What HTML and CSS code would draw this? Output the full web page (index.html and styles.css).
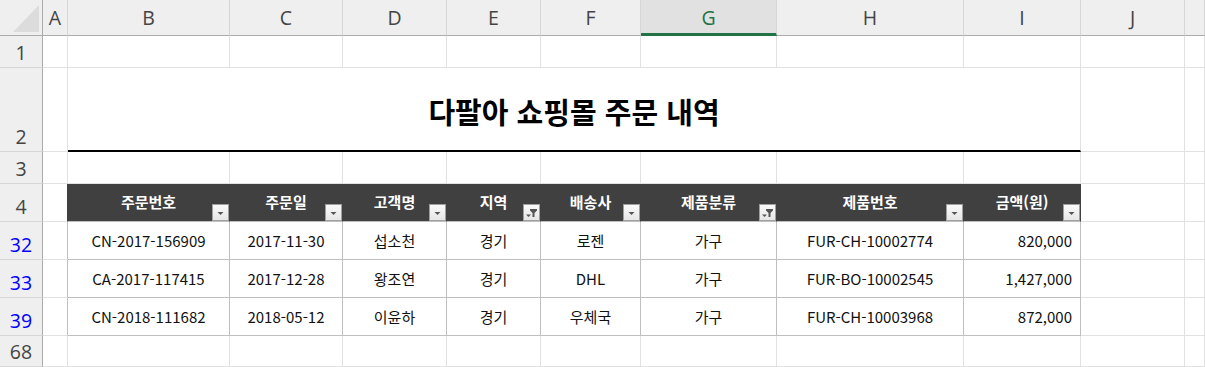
FILE: index.html
```html
<!DOCTYPE html>
<html lang="ko">
<head>
<meta charset="utf-8">
<title>다팔아 쇼핑몰 주문 내역</title>
<link rel="stylesheet" href="styles.css">
</head>
<body>
<div class="sheet">
  <div class="corner"><svg width="42" height="35" viewBox="0 0 42 35"><polygon points="13,32 39,32 39,5" fill="#dcdcdc"/></svg></div>
  <div class="ch">A</div><div class="ch">B</div><div class="ch">C</div><div class="ch">D</div><div class="ch">E</div><div class="ch">F</div><div class="ch sel">G</div><div class="ch">H</div><div class="ch">I</div><div class="ch">J</div><div class="ch"></div>

  <div class="rh">1</div>
  <div class="c"></div><div class="c"></div><div class="c"></div><div class="c"></div><div class="c"></div><div class="c"></div><div class="c"></div><div class="c"></div><div class="c"></div><div class="c"></div><div class="c"></div>

  <div class="rh">2</div>
  <div class="c"></div>
  <div class="c title">다팔아 쇼핑몰 주문 내역</div>
  <div class="c"></div><div class="c"></div>

  <div class="rh">3</div>
  <div class="c"></div><div class="c"></div><div class="c"></div><div class="c"></div><div class="c"></div><div class="c"></div><div class="c"></div><div class="c"></div><div class="c"></div><div class="c"></div><div class="c"></div>

  <div class="rh">4</div>
  <div class="c lead dark-edge"></div>
  <div class="c hd">주문번호<span class="fb"><svg width="15" height="15" viewBox="0 0 15 15"><polygon points="4.5,7 10.5,7 7.5,10" fill="#555"/></svg></span></div>
  <div class="c hd">주문일<span class="fb"><svg width="15" height="15" viewBox="0 0 15 15"><polygon points="4.5,7 10.5,7 7.5,10" fill="#555"/></svg></span></div>
  <div class="c hd">고객명<span class="fb"><svg width="15" height="15" viewBox="0 0 15 15"><polygon points="4.5,7 10.5,7 7.5,10" fill="#555"/></svg></span></div>
  <div class="c hd">지역<span class="fb"><svg width="15" height="15" viewBox="0 0 15 15"><polygon points="6,4 13,4 13,5.5 10.5,8 10.5,12 8.5,12 8.5,8 6,5.5" fill="#555"/><polygon points="2,9.5 7,9.5 4.5,12" fill="#555"/></svg></span></div>
  <div class="c hd">배송사<span class="fb"><svg width="15" height="15" viewBox="0 0 15 15"><polygon points="4.5,7 10.5,7 7.5,10" fill="#555"/></svg></span></div>
  <div class="c hd">제품분류<span class="fb"><svg width="15" height="15" viewBox="0 0 15 15"><polygon points="6,4 13,4 13,5.5 10.5,8 10.5,12 8.5,12 8.5,8 6,5.5" fill="#555"/><polygon points="2,9.5 7,9.5 4.5,12" fill="#555"/></svg></span></div>
  <div class="c hd">제품번호<span class="fb"><svg width="15" height="15" viewBox="0 0 15 15"><polygon points="4.5,7 10.5,7 7.5,10" fill="#555"/></svg></span></div>
  <div class="c hd">금액(원)<span class="fb"><svg width="15" height="15" viewBox="0 0 15 15"><polygon points="4.5,7 10.5,7 7.5,10" fill="#555"/></svg></span></div>
  <div class="c"></div><div class="c"></div>

  <div class="rh blue">32</div>
  <div class="c lead"></div>
  <div class="c td">CN-2017-156909</div><div class="c td">2017-11-30</div><div class="c td">섭소천</div><div class="c td">경기</div><div class="c td">로젠</div><div class="c td">가구</div><div class="c td">FUR-CH-10002774</div><div class="c td num">820,000</div>
  <div class="c"></div><div class="c"></div>

  <div class="rh blue">33</div>
  <div class="c lead"></div>
  <div class="c td">CA-2017-117415</div><div class="c td">2017-12-28</div><div class="c td">왕조연</div><div class="c td">경기</div><div class="c td">DHL</div><div class="c td">가구</div><div class="c td">FUR-BO-10002545</div><div class="c td num">1,427,000</div>
  <div class="c"></div><div class="c"></div>

  <div class="rh blue">39</div>
  <div class="c lead"></div>
  <div class="c td">CN-2018-111682</div><div class="c td">2018-05-12</div><div class="c td">이윤하</div><div class="c td">경기</div><div class="c td">우체국</div><div class="c td">가구</div><div class="c td">FUR-CH-10003968</div><div class="c td num">872,000</div>
  <div class="c"></div><div class="c"></div>

  <div class="rh">68</div>
  <div class="c"></div><div class="c"></div><div class="c"></div><div class="c"></div><div class="c"></div><div class="c"></div><div class="c"></div><div class="c"></div><div class="c"></div><div class="c"></div><div class="c"></div>
</div>
</body>
</html>
```

FILE: styles.css
```css
html, body {
  margin: 0;
  padding: 0;
  background: #fff;
  overflow: hidden;
}

.sheet {
  display: grid;
  grid-template-columns: 43px 25px 162px 113px 104px 94px 100px 136px 187px 117px 104px 1fr;
  grid-template-rows: 36px 32px 84px 32px 38px 38px 38px 38px 1fr;
  width: 1205px;
  height: 367px;
  font-family: "Noto Sans CJK KR", "Noto Sans", sans-serif;
}

.sheet > div {
  box-sizing: border-box;
  min-width: 0;
}

.corner {
  background: #efefef;
  border-right: 1px solid #ababab;
  border-bottom: 1px solid #ababab;
}
.corner svg { display: block; }

.ch {
  background: #efefef;
  border-right: 1px solid #d6d6d6;
  border-bottom: 1px solid #ababab;
  color: #444;
  font-family: "Open Sans", "Noto Sans", sans-serif;
  font-size: 19.5px;
  display: flex;
  align-items: center;
  justify-content: center;
}
.ch.sel {
  background: #e1e1e1;
  color: #217346;
  border-bottom: 3px solid #217346;
  padding-top: 2px;
}

.rh {
  background: #efefef;
  border-right: 1px solid #ababab;
  border-bottom: 1px solid #d6d6d6;
  color: #444;
  font-family: "Open Sans", "Noto Sans", sans-serif;
  font-size: 19.5px;
  line-height: 20px;
  display: flex;
  align-items: flex-end;
  justify-content: center;
  padding-bottom: 4px;
}
.rh.blue { color: #0000ff; }

.c {
  border-right: 1px solid #e1e1e1;
  border-bottom: 1px solid #e1e1e1;
}

.title {
  grid-column: span 8;
  border-bottom: 2px solid #000;
  display: flex;
  align-items: center;
  justify-content: center;
  font-size: 29px;
  font-weight: 700;
  color: #000;
  padding-top: 3px;
}

.lead { border-right-color: #bfbfbf; }
.dark-edge { border-right-color: #404040; }

.hd {
  position: relative;
  background: #404040;
  border-right-color: #404040;
  border-bottom-color: #bfbfbf;
  color: #fff;
  font-weight: 700;
  font-size: 15px;
  display: flex;
  align-items: center;
  justify-content: center;
  padding-bottom: 3px;
}

.fb {
  position: absolute;
  right: 0;
  bottom: 0;
  width: 17px;
  height: 17px;
  box-sizing: border-box;
  border: 1px solid #a0a0a0;
  background: linear-gradient(#fafafa, #e6e6e6);
}
.fb svg { display: block; }

.td {
  border-right-color: #bfbfbf;
  border-bottom-color: #bfbfbf;
  color: #111;
  font-size: 15px;
  display: flex;
  align-items: center;
  justify-content: center;
}
.td.num {
  justify-content: flex-end;
  padding-right: 8px;
}
```
